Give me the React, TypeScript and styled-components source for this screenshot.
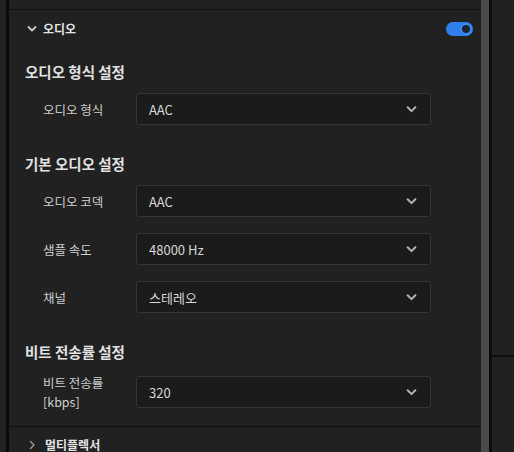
import React from 'react';
import styled, { createGlobalStyle } from 'styled-components';

const GlobalStyle = createGlobalStyle`
  html, body {
    margin: 0;
    padding: 0;
    background: #212121;
  }
  * {
    box-sizing: border-box;
  }
`;

const Chevron = ({ dir = 'down', color = '#c8c8c8', size = 10 }: { dir?: 'down' | 'right'; color?: string; size?: number }) => (
  <svg width={size} height={size} viewBox="0 0 10 10" fill="none">
    {dir === 'down' ? (
      <polyline points="1.5,3 5,6.5 8.5,3" stroke={color} strokeWidth="1.8" strokeLinecap="round" strokeLinejoin="round" />
    ) : (
      <polyline points="3.5,1.5 7,5 3.5,8.5" stroke={color} strokeWidth="1.4" strokeLinecap="round" strokeLinejoin="round" />
    )}
  </svg>
);

const Row = ({ label, value }: { label: React.ReactNode; value: string }) => (
  <FieldRow>
    <Label>{label}</Label>
    <Select>
      <span>{value}</span>
      <Chevron color="#b4b4b4" size={11} />
    </Select>
  </FieldRow>
);

const App = () => {
  return (
    <Page>
      <GlobalStyle />
      <Gutter />
      <BlackLine />
      <Panel>
        <TopStrip />
        <Header>
          <HeaderLeft>
            <Chevron />
            <HeaderTitle>오디오</HeaderTitle>
          </HeaderLeft>
          <Toggle>
            <Knob />
          </Toggle>
        </Header>

        <Section>
          <SectionTitle>오디오 형식 설정</SectionTitle>
          <Row label="오디오 형식" value="AAC" />
        </Section>

        <Section>
          <SectionTitle>기본 오디오 설정</SectionTitle>
          <Row label="오디오 코덱" value="AAC" />
          <Row label="샘플 속도" value="48000 Hz" />
          <Row label="채널" value="스테레오" />
        </Section>

        <Section>
          <SectionTitle>비트 전송률 설정</SectionTitle>
          <Row
            label={
              <>
                비트 전송률
                <br />
                [kbps]
              </>
            }
            value="320"
          />
        </Section>

        <Collapsed>
          <Chevron dir="right" color="#9a9a9a" />
          <HeaderTitle>멀티플렉서</HeaderTitle>
        </Collapsed>
      </Panel>
      <Scrollbar />
      <BlackLine />
      <SidePanel>
        <SideLine />
      </SidePanel>
    </Page>
  );
};

const Page = styled.div`
  display: flex;
  height: 452px;
  width: 514px;
  overflow: hidden;
  background: #212121;
  font-family: 'Noto Sans CJK KR', 'Noto Sans', sans-serif;
`;

const Gutter = styled.div`
  flex: 0 0 6px;
  background: #222222;
`;

const BlackLine = styled.div`
  flex: 0 0 3px;
  background: #0b0b0b;
`;

const Panel = styled.div`
  flex: 0 0 472px;
  display: flex;
  flex-direction: column;
  overflow: hidden;
  background: #212121;
  & > * {
    flex-shrink: 0;
  }
`;

const TopStrip = styled.div`
  height: 10px;
  border-bottom: 1px solid #121212;
`;

const Header = styled.div`
  height: 38px;
  display: flex;
  align-items: center;
  justify-content: space-between;
  padding: 0 8px 0 18px;
`;

const HeaderLeft = styled.div`
  display: flex;
  align-items: center;
  gap: 6px;
`;

const HeaderTitle = styled.span`
  color: #e4e4e4;
  font-size: 12px;
  font-weight: 700;
  line-height: 16px;
`;

const Toggle = styled.div`
  width: 27px;
  height: 14px;
  border-radius: 7px;
  background: #2f80ed;
  display: flex;
  align-items: center;
  justify-content: flex-end;
  padding: 0 1px;
`;

const Knob = styled.div`
  width: 12px;
  height: 12px;
  border-radius: 50%;
  background: #1d2430;
  border: 2px solid #3b8cf5;
`;

const Section = styled.div`
  display: flex;
  flex-direction: column;
  padding: 14px 50px 0 16px;
  & + & {
    padding-top: 29px;
  }
`;

const SectionTitle = styled.div`
  color: #e2e2e2;
  font-size: 14.5px;
  font-weight: 600;
  line-height: 20px;
  margin-bottom: 11px;
`;

const FieldRow = styled.div`
  display: flex;
  align-items: center;
  padding-left: 18px;
  & + & {
    margin-top: 16px;
  }
`;

const Label = styled.div`
  flex: 0 0 93px;
  color: #cfcfcf;
  font-size: 12.5px;
  line-height: 19px;
`;

const Select = styled.div`
  flex: 1;
  height: 32px;
  display: flex;
  align-items: center;
  justify-content: space-between;
  padding: 0 13px 0 12px;
  background: #1b1b1b;
  border: 1px solid #343434;
  border-radius: 3px;
  color: #d6d6d6;
  font-size: 13px;
  white-space: nowrap;
`;

const Collapsed = styled.div`
  margin-top: 15px;
  border-top: 1px solid #111111;
  height: 34px;
  display: flex;
  align-items: center;
  gap: 8px;
  padding: 2px 0 0 18px;
`;

const Scrollbar = styled.div`
  flex: 0 0 8px;
  background: #4a4a4a;
`;

const SidePanel = styled.div`
  flex: 1;
  background: #212121;
  padding-top: 355px;
`;

const SideLine = styled.div`
  height: 2px;
  background: #0e0e0e;
`;

export default App;
